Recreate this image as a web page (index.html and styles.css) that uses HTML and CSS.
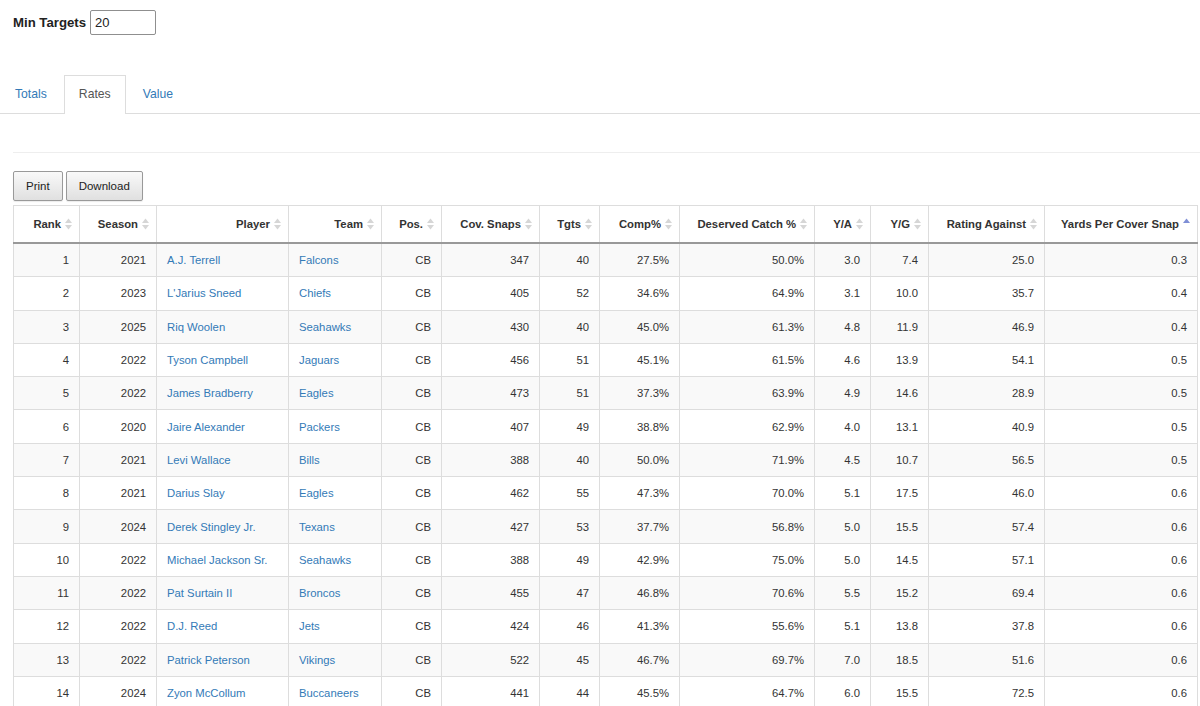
FILE: index.html
```html
<!DOCTYPE html>
<html>
<head>
<meta charset="utf-8">
<link rel="stylesheet" href="styles.css">
</head>
<body>
<div class="filters">
  <label class="flabel">Min Targets</label>
  <input class="finput" type="text" value="20">
</div>
<ul class="tabs">
  <li class="tab"><a>Totals</a></li>
  <li class="tab active"><a>Rates</a></li>
  <li class="tab"><a>Value</a></li>
</ul>
<div class="content">
  <div class="rule"></div>
  <div class="btns">
    <button class="btn">Print</button>
    <button class="btn">Download</button>
  </div>
  <table class="grid">
    <colgroup>
      <col style="width:66px"><col style="width:77px"><col style="width:132px"><col style="width:93px"><col style="width:60px"><col style="width:98px"><col style="width:60px"><col style="width:80px"><col style="width:135px"><col style="width:56px"><col style="width:58px"><col style="width:116px"><col style="width:153px">
    </colgroup>
    <thead>
      <tr id="hrow"></tr>
    </thead>
    <tbody id="tb"></tbody>
  </table>
</div>
<script src="app.js"></script>
</body>
</html>
```

FILE: app.js
```js
var heads = ["Rank","Season","Player","Team","Pos.","Cov. Snaps","Tgts","Comp%","Deserved Catch %","Y/A","Y/G","Rating Against","Yards Per Cover Snap"];
var sortIcon = '<svg class="si" width="7" height="12" viewBox="0 0 7 12"><polygon points="0,5 3.5,0.5 7,5" fill="#d6d6d6"/><polygon points="0,7 3.5,11.5 7,7" fill="#d6d6d6"/></svg>';
var ascIcon = '<svg class="si" width="7" height="12" viewBox="0 0 7 12"><polygon points="0,5 3.5,0.5 7,5" fill="#7f8fd6"/></svg>';
var hr = document.getElementById('hrow');
heads.forEach(function(h, i){
  var th = document.createElement('th');
  th.innerHTML = '<span>' + h + '</span>' + (i === heads.length - 1 ? ascIcon : sortIcon);
  hr.appendChild(th);
});
var rows = [
[1,2021,"A.J. Terrell","Falcons","CB",347,40,"27.5%","50.0%","3.0","7.4","25.0","0.3"],
[2,2023,"L'Jarius Sneed","Chiefs","CB",405,52,"34.6%","64.9%","3.1","10.0","35.7","0.4"],
[3,2025,"Riq Woolen","Seahawks","CB",430,40,"45.0%","61.3%","4.8","11.9","46.9","0.4"],
[4,2022,"Tyson Campbell","Jaguars","CB",456,51,"45.1%","61.5%","4.6","13.9","54.1","0.5"],
[5,2022,"James Bradberry","Eagles","CB",473,51,"37.3%","63.9%","4.9","14.6","28.9","0.5"],
[6,2020,"Jaire Alexander","Packers","CB",407,49,"38.8%","62.9%","4.0","13.1","40.9","0.5"],
[7,2021,"Levi Wallace","Bills","CB",388,40,"50.0%","71.9%","4.5","10.7","56.5","0.5"],
[8,2021,"Darius Slay","Eagles","CB",462,55,"47.3%","70.0%","5.1","17.5","46.0","0.6"],
[9,2024,"Derek Stingley Jr.","Texans","CB",427,53,"37.7%","56.8%","5.0","15.5","57.4","0.6"],
[10,2022,"Michael Jackson Sr.","Seahawks","CB",388,49,"42.9%","75.0%","5.0","14.5","57.1","0.6"],
[11,2022,"Pat Surtain II","Broncos","CB",455,47,"46.8%","70.6%","5.5","15.2","69.4","0.6"],
[12,2022,"D.J. Reed","Jets","CB",424,46,"41.3%","55.6%","5.1","13.8","37.8","0.6"],
[13,2022,"Patrick Peterson","Vikings","CB",522,45,"46.7%","69.7%","7.0","18.5","51.6","0.6"],
[14,2024,"Zyon McCollum","Buccaneers","CB",441,44,"45.5%","64.7%","6.0","15.5","72.5","0.6"]
];
var tb = document.getElementById('tb');
rows.forEach(function(r){
  var tr = document.createElement('tr');
  r.forEach(function(v, i){
    var td = document.createElement('td');
    if (i === 2 || i === 3) { td.className = 'lnk'; td.innerHTML = '<a>' + v + '</a>'; }
    else td.textContent = v;
    tr.appendChild(td);
  });
  tb.appendChild(tr);
});
```

FILE: styles.css
```css
html, body {
  margin: 0;
  padding: 0;
  overflow: hidden;
  background: #fff;
}
body {
  font-family: "Liberation Sans", Arial, sans-serif;
  color: #333;
}
.filters {
  display: flex;
  align-items: center;
  padding: 10px 13px 0 13px;
  height: 25px;
}
.flabel {
  font-weight: bold;
  font-size: 13.2px;
  color: #222;
  margin-right: 4px;
}
.finput {
  width: 66px;
  height: 25px;
  box-sizing: border-box;
  border: 1px solid #8f8f8f;
  border-radius: 2px;
  padding: 1px 4px;
  font-family: "Liberation Sans", Arial, sans-serif;
  font-size: 13px;
  color: #222;
}
.tabs {
  list-style: none;
  margin: 40px 0 0 0;
  padding: 0;
  display: flex;
  border-bottom: 1px solid #ddd;
  height: 38px;
}
.tab {
  margin-right: 2px;
  margin-bottom: -1px;
}
.tab a {
  display: block;
  height: 38px;
  box-sizing: border-box;
  padding: 11px 14px 0 14px;
  font-size: 12.2px;
  color: #337ab7;
  border: 1px solid transparent;
  border-bottom: none;
}
.tab.active a {
  color: #555;
  background: #fff;
  border-color: #ddd;
  height: 39px;
}
.content {
  padding: 0 0 0 13px;
}
.rule {
  margin-top: 38px;
  border-top: 1px solid #eee;
}
.btns {
  display: flex;
  gap: 3px;
  margin-top: 18px;
  height: 30px;
}
.btn {
  height: 30px;
  box-sizing: border-box;
  padding: 0 12px;
  font-family: "Liberation Sans", Arial, sans-serif;
  font-size: 11.5px;
  color: #222;
  border: 1px solid #999;
  border-radius: 2px;
  background: linear-gradient(to bottom, #f9f9f9 0%, #e0e0e0 100%);
  box-shadow: 0 1px 1px rgba(0,0,0,0.08);
}
.grid {
  margin-top: 4px;
  border-collapse: collapse;
  table-layout: fixed;
  width: 1184px;
  font-size: 11.3px;
}
.grid th {
  height: 36px;
  text-align: right;
  font-weight: bold;
  color: #333;
  padding: 0 7px 0 10px;
  border: 1px solid #ddd;
  border-bottom: 2px solid #999;
  white-space: nowrap;
  vertical-align: middle;
}
.si {
  display: inline-block;
  vertical-align: middle;
  margin-left: 4px;
  margin-top: -2px;
}
.grid td {
  height: 32.3px;
  text-align: right;
  padding: 0 10px;
  border: 1px solid #ddd;
  white-space: nowrap;
  vertical-align: middle;
}
.grid tbody tr:nth-child(odd) td {
  background: #f9f9f9;
}
.grid td.lnk {
  text-align: left;
}
.grid td.lnk a {
  color: #337ab7;
}
```
